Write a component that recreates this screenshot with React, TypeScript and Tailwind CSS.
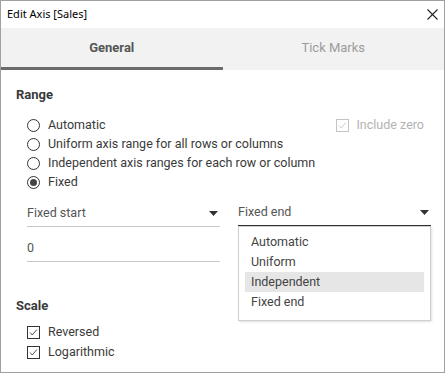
import { useState } from 'react';

const Radio = ({ checked }: { checked?: boolean }) => (
  <span className="flex h-[13px] w-[13px] shrink-0 items-center justify-center rounded-full border border-[#333]">
    {checked && <span className="h-[7px] w-[7px] rounded-full bg-[#444]"></span>}
  </span>
);

const Check = ({ disabled }: { disabled?: boolean }) => (
  <span
    className={`flex h-[13px] w-[13px] shrink-0 items-center justify-center border ${
      disabled ? 'border-[#c4c4c4]' : 'border-[#333]'
    }`}
  >
    <svg viewBox="0 0 13 13" className="h-[13px] w-[13px]">
      <path d="M2.5 6.5l2.5 3L10.5 3" fill="none" stroke={disabled ? '#c4c4c4' : '#333'} strokeWidth="1" />
    </svg>
  </span>
);

const Caret = () => (
  <svg viewBox="0 0 9 5" className="h-[5px] w-[9px]">
    <path d="M0 0h9L4.5 5z" fill="#333" />
  </svg>
);

const rangeOptions = [
  'Automatic',
  'Uniform axis range for all rows or columns',
  'Independent axis ranges for each row or column',
  'Fixed',
];

const menuItems = ['Automatic', 'Uniform', 'Independent', 'Fixed end'];

export default function App() {
  const [tab] = useState('general');

  return (
    <div className="h-[374px] w-[448px] bg-white font-['Roboto',sans-serif] text-[12.5px] text-[#3a3a3a]">
      <div className="flex h-[373px] w-[445px] flex-col border border-[#a0a0a0]">
        {/* Title bar */}
        <div className="flex h-[27px] shrink-0 items-center justify-between pl-[6px] pr-[6px]">
          <span className="font-['Noto_Sans',sans-serif] text-[11px] text-black">Edit Axis [Sales]</span>
          <svg viewBox="0 0 11 11" className="h-[11px] w-[11px]">
            <path d="M0.5 0.5l10 10M10.5 0.5l-10 10" stroke="#222" strokeWidth="1.1" />
          </svg>
        </div>

        {/* Tabs */}
        <div className="flex h-[42px] shrink-0 bg-[#f2f2f2]">
          <div
            className={`flex flex-1 items-center justify-center border-b-[3px] text-[13px] font-bold ${
              tab === 'general' ? 'border-[#6b6b6b] text-[#555]' : 'border-transparent'
            }`}
          >
            General
          </div>
          <div className="flex flex-1 items-center justify-center border-b-[3px] border-transparent text-[13px] text-[#9c9c9c]">
            Tick Marks
          </div>
        </div>

        {/* Body */}
        <div className="flex flex-col pl-[15px] pr-[13px]">
          <div className="mt-[17px] h-[16px] text-[13px] font-bold leading-[16px]">Range</div>

          <div className="relative mt-[13px] pl-[11px]">
            {rangeOptions.map((opt, i) => (
              <div key={opt} className="flex h-[19px] items-center gap-[8px]">
                <Radio checked={i === 3} />
                <span>{opt}</span>
              </div>
            ))}
            <div className="absolute right-[7px] top-0 flex h-[19px] items-center gap-[7px] text-[#b3b3b3]">
              <Check disabled />
              <span>Include zero</span>
            </div>
          </div>

          <div className="mt-[8px] grid grid-cols-[193px_193px] gap-x-[18px] pl-[11px]">
            <div className="flex h-[27px] items-center justify-between border-b border-[#c8c8c8] pr-[2px] text-[#555]">
              <span>Fixed start</span>
              <Caret />
            </div>
            <div className="relative">
              <div className="flex h-[26px] items-center justify-between border-b border-[#333] pr-[2px] text-[#555]">
                <span>Fixed end</span>
                <Caret />
              </div>
              <div className="absolute left-0 top-[26px] z-10 h-[95px] w-[193px] border border-[#cfcfcf] bg-white px-[6px] py-[5px] shadow-[1px_1px_2px_rgba(0,0,0,0.12)]">
                {menuItems.map((item) => (
                  <div
                    key={item}
                    className={`flex h-[20px] items-center pl-[6px] text-[#444] ${
                      item === 'Independent' ? 'bg-[#e6e6e6]' : ''
                    }`}
                  >
                    {item}
                  </div>
                ))}
              </div>
            </div>

            <div className="mt-[9px] flex h-[26px] items-center border-b border-[#c8c8c8] text-[#555]">
              <span>0</span>
            </div>
          </div>

          <div className="mt-[36px] h-[16px] text-[13px] font-bold leading-[16px]">Scale</div>

          <div className="mt-[8px] pl-[11px]">
            {['Reversed', 'Logarithmic'].map((label) => (
              <div key={label} className="flex h-[20px] items-center gap-[8px]">
                <Check />
                <span>{label}</span>
              </div>
            ))}
          </div>
        </div>
      </div>
    </div>
  );
}
